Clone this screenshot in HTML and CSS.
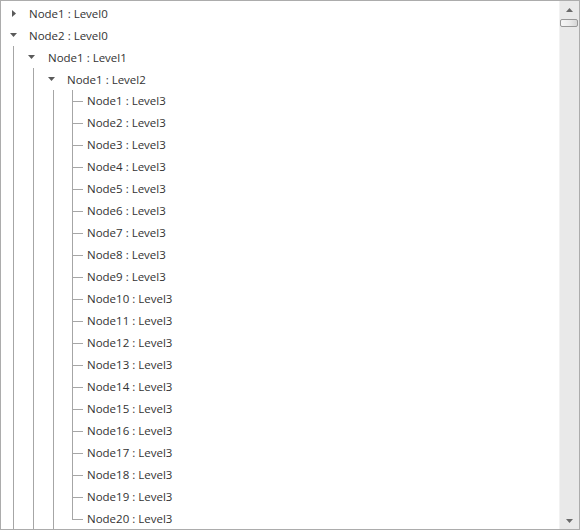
FILE: index.html
```html
<!DOCTYPE html>
<html>
<head>
<meta charset="utf-8">
<link rel="stylesheet" href="styles.css">
</head>
<body>
<div class="tree-view">
  <div class="tree-pane">
    <ul class="tree">
      <li>
        <div class="row"><span class="toggle t0"><svg class="arrow-right" width="4" height="7" viewBox="0 0 4 7"><polygon points="0,0 4,3.5 0,7"/></svg></span><span class="label">Node1 : Level0</span></div>
      </li>
      <li>
        <div class="row"><span class="toggle t0"><svg class="arrow-down d0" width="7" height="4" viewBox="0 0 7 4"><polygon points="0,0 7,0 3.5,4"/></svg></span><span class="label">Node2 : Level0</span></div>
        <ul class="children c0">
          <li>
            <div class="row"><span class="toggle t1"><svg class="arrow-down d1" width="7" height="4" viewBox="0 0 7 4"><polygon points="0,0 7,0 3.5,4"/></svg></span><span class="label">Node1 : Level1</span></div>
            <ul class="children c1">
              <li>
                <div class="row"><span class="toggle t2"><svg class="arrow-down d1" width="7" height="4" viewBox="0 0 7 4"><polygon points="0,0 7,0 3.5,4"/></svg></span><span class="label">Node1 : Level2</span></div>
                <ul class="children c2">
                  <li>
                    <ul class="leaves">
                      <li class="leaf"><span class="conn"></span><span class="label">Node1 : Level3</span></li>
                      <li class="leaf"><span class="conn"></span><span class="label">Node2 : Level3</span></li>
                      <li class="leaf"><span class="conn"></span><span class="label">Node3 : Level3</span></li>
                      <li class="leaf"><span class="conn"></span><span class="label">Node4 : Level3</span></li>
                      <li class="leaf"><span class="conn"></span><span class="label">Node5 : Level3</span></li>
                      <li class="leaf"><span class="conn"></span><span class="label">Node6 : Level3</span></li>
                      <li class="leaf"><span class="conn"></span><span class="label">Node7 : Level3</span></li>
                      <li class="leaf"><span class="conn"></span><span class="label">Node8 : Level3</span></li>
                      <li class="leaf"><span class="conn"></span><span class="label">Node9 : Level3</span></li>
                      <li class="leaf"><span class="conn"></span><span class="label">Node10 : Level3</span></li>
                      <li class="leaf"><span class="conn"></span><span class="label">Node11 : Level3</span></li>
                      <li class="leaf"><span class="conn"></span><span class="label">Node12 : Level3</span></li>
                      <li class="leaf"><span class="conn"></span><span class="label">Node13 : Level3</span></li>
                      <li class="leaf"><span class="conn"></span><span class="label">Node14 : Level3</span></li>
                      <li class="leaf"><span class="conn"></span><span class="label">Node15 : Level3</span></li>
                      <li class="leaf"><span class="conn"></span><span class="label">Node16 : Level3</span></li>
                      <li class="leaf"><span class="conn"></span><span class="label">Node17 : Level3</span></li>
                      <li class="leaf"><span class="conn"></span><span class="label">Node18 : Level3</span></li>
                      <li class="leaf"><span class="conn"></span><span class="label">Node19 : Level3</span></li>
                      <li class="leaf"><span class="conn"></span><span class="label">Node20 : Level3</span></li>
                    </ul>
                  </li>
                </ul>
              </li>
            </ul>
          </li>
        </ul>
      </li>
    </ul>
  </div>
  <div class="scrollbar">
    <div class="sb-btn"><svg width="7" height="4" viewBox="0 0 7 4"><polygon points="0,4 7,4 3.5,0"/></svg></div>
    <div class="sb-track"><div class="sb-thumb"></div></div>
    <div class="sb-btn"><svg width="7" height="4" viewBox="0 0 7 4"><polygon points="0,0 7,0 3.5,4"/></svg></div>
  </div>
</div>
</body>
</html>
```
FILE: styles.css
```css
html, body {
  margin: 0;
  padding: 0;
  background: #ffffff;
}

.tree-view {
  box-sizing: border-box;
  width: 580px;
  height: 530px;
  border: 1px solid #acacac;
  display: flex;
  background: #ffffff;
  font-family: "Open Sans", "Liberation Sans", sans-serif;
  font-size: 11.5px;
  color: #333333;
}

.tree-pane {
  flex: 1;
  overflow: hidden;
  padding-top: 1px;
}

.tree, .children, .leaves {
  list-style: none;
  margin: 0;
  padding: 0;
}

.row, .leaf {
  height: 22px;
  display: flex;
  align-items: center;
  white-space: nowrap;
}

.toggle {
  display: flex;
  align-items: center;
  height: 22px;
  flex: none;
}

.toggle svg {
  fill: #5a5a5a;
  display: block;
}

.t0 { width: 28px; }
.t1 { width: 34px; }
.t2 { width: 33px; }

.arrow-right { margin-left: 11px; }
.arrow-down.d0 { margin-left: 9px; }
.arrow-down.d1 { margin-left: 14px; }

.children {
  border-left: 1px solid #a6a6a6;
}

.c0 { margin-left: 12px; }
.c1 { margin-left: 19px; }
.c2 { margin-left: 19px; }

.leaves {
  margin-left: 18px;
}

.leaf {
  align-items: flex-start;
  border-left: 1px solid #a6a6a6;
}

.leaf:last-child {
  border-left: none;
}

.conn {
  flex: none;
  width: 10px;
  height: 11px;
  border-bottom: 1px solid #a6a6a6;
}

.leaf:last-child .conn {
  border-left: 1px solid #a6a6a6;
}

.leaf .label {
  margin-left: 4px;
  line-height: 22px;
}

.scrollbar {
  width: 20px;
  flex: none;
  display: flex;
  flex-direction: column;
  background: #e9e9e9;
  border-left: 1px solid #f2f2f2;
  box-sizing: border-box;
}

.sb-btn {
  height: 17px;
  display: flex;
  align-items: center;
  justify-content: center;
  flex: none;
}

.sb-btn svg {
  fill: #6a6a6a;
  display: block;
}

.sb-track {
  flex: 1;
  display: flex;
  flex-direction: column;
}

.sb-thumb {
  margin: 1px 1px 0 0;
  height: 8px;
  box-sizing: border-box;
  border: 1px solid #979797;
  border-radius: 2px;
  background: linear-gradient(to right, #f6f6f6 0%, #ececec 50%, #d6d6d6 100%);
}
```
